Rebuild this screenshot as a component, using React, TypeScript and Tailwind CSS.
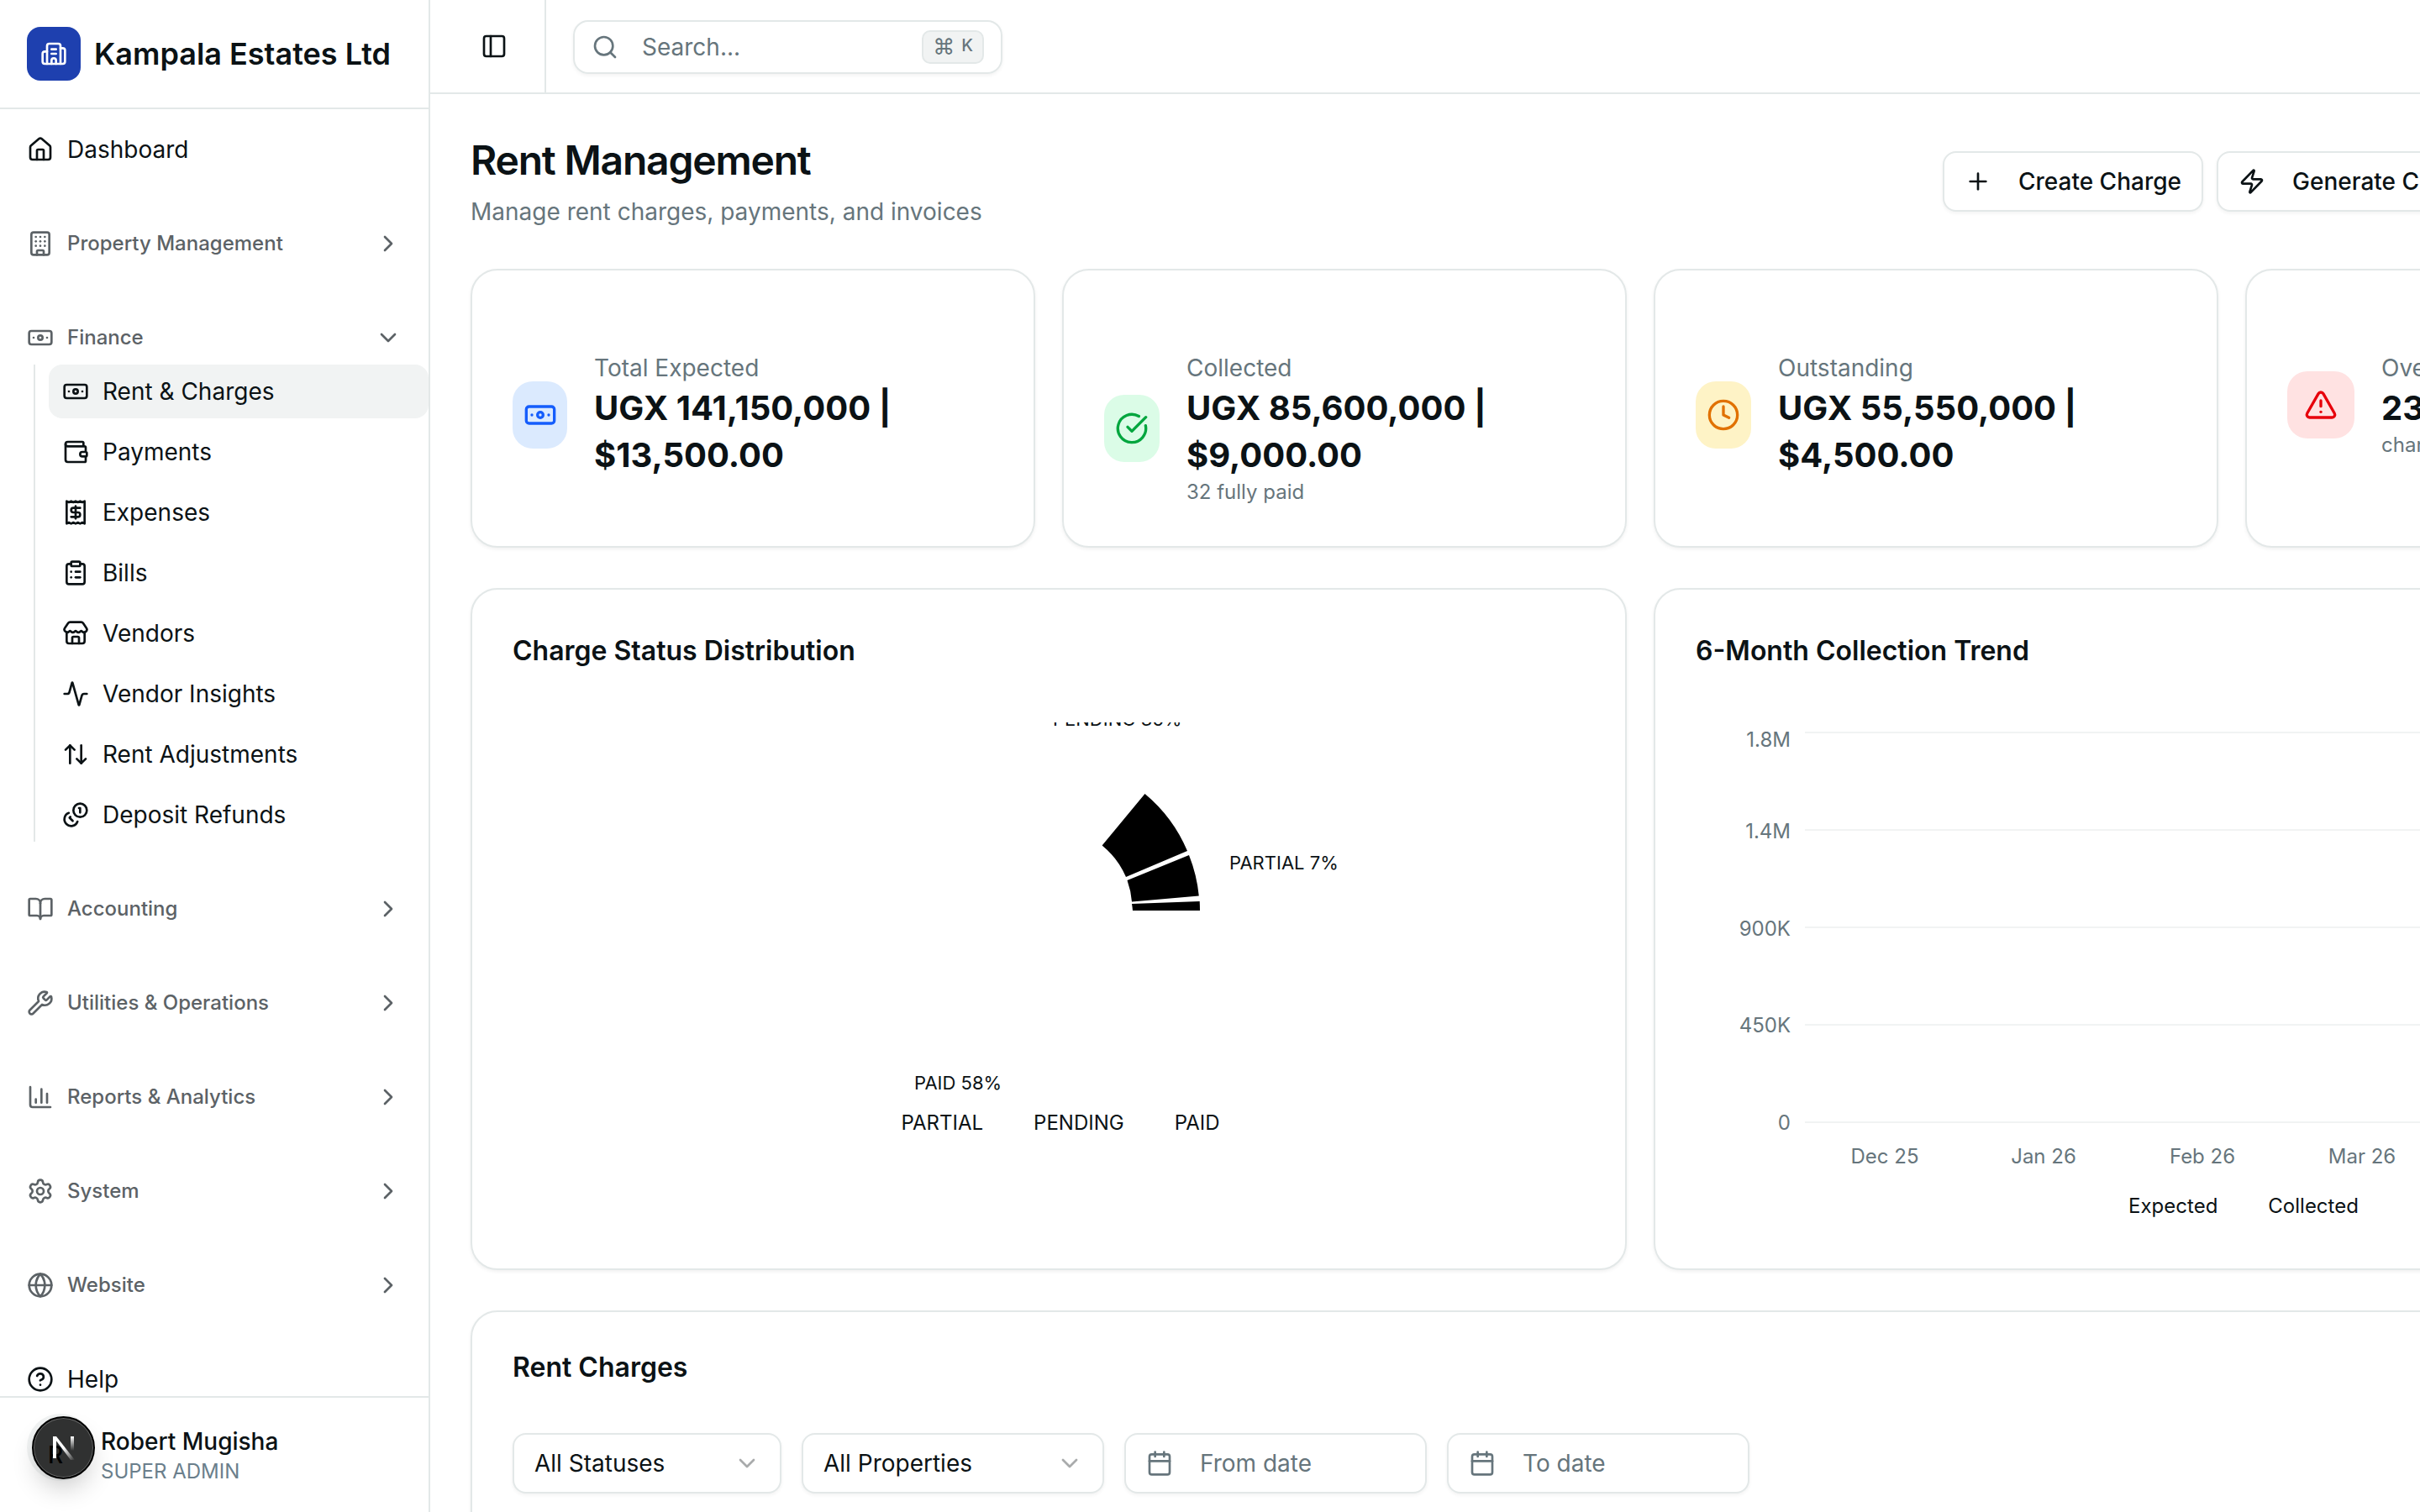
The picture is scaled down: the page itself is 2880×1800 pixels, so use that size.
import React from "react";
import {
  Activity,
  ArrowUpDown,
  Banknote,
  BookOpen,
  Building,
  Building2,
  Calendar,
  ChartColumn,
  ChevronDown,
  ChevronRight,
  CircleCheckBig,
  CircleHelp,
  ClipboardList,
  Clock,
  Globe,
  House,
  PanelLeft,
  Plus,
  Receipt,
  Search,
  Settings,
  Store,
  TriangleAlert,
  Wallet,
  Wrench,
  Zap,
} from "lucide-react";

// coins icon with the full coin on the top right, as in the picture
const RefundCoins = ({ size = 32, className = "" }: { size?: number; className?: string }) => (
  <svg
    width={size}
    height={size}
    viewBox="0 0 24 24"
    fill="none"
    stroke="currentColor"
    strokeWidth="2"
    strokeLinecap="round"
    strokeLinejoin="round"
    className={className}
  >
    <circle cx="16" cy="8" r="6" />
    <path d="M5.91 10.37A6 6 0 1 0 13.66 18" />
    <path d="M15 6h1v4" />
    <path d="m7.29 13.88-.7.71 2.82 2.82" />
  </svg>
);

const financeItems = [
  { label: "Rent & Charges", icon: Banknote, active: true },
  { label: "Payments", icon: Wallet },
  { label: "Expenses", icon: Receipt },
  { label: "Bills", icon: ClipboardList },
  { label: "Vendors", icon: Store },
  { label: "Vendor Insights", icon: Activity },
  { label: "Rent Adjustments", icon: ArrowUpDown },
  { label: "Deposit Refunds", icon: RefundCoins },
];

const stats = [
  {
    label: "Total Expected",
    value: "UGX 141,150,000 | $13,500.00",
    icon: Banknote,
    tile: "bg-blue-100 text-blue-600 w-[65px]",
  },
  {
    label: "Collected",
    value: "UGX 85,600,000 | $9,000.00",
    note: "32 fully paid",
    icon: CircleCheckBig,
    tile: "bg-green-100 text-green-600 w-[66px]",
  },
  {
    label: "Outstanding",
    value: "UGX 55,550,000 | $4,500.00",
    icon: Clock,
    tile: "bg-amber-100 text-amber-600 w-[66px]",
  },
  {
    label: "Overdue",
    value: "23",
    note: "charges",
    icon: TriangleAlert,
    tile: "bg-red-100 text-red-600 w-20",
  },
];

const NavGroup = ({ label, icon: Icon, open }: { label: string; icon: any; open?: boolean }) => (
  <div className="flex h-16 shrink-0 items-center gap-4 pl-8 pr-8 text-[24px] font-medium text-[#5c6266]">
    <Icon size={32} strokeWidth={2} className="shrink-0" />
    <span className="flex-1">{label}</span>
    {open ? <ChevronDown size={32} /> : <ChevronRight size={32} />}
  </div>
);

const NavLink = ({ label, icon: Icon }: { label: string; icon: any }) => (
  <div className="flex h-16 shrink-0 items-center gap-4 pl-8 text-[28px] text-[#0b1215]">
    <Icon size={32} className="shrink-0" />
    <span>{label}</span>
  </div>
);

const Sidebar = () => (
  <aside className="flex h-screen w-[512px] shrink-0 flex-col border-r-2 border-[#e3e8e8] bg-white">
    <div className="flex h-[130px] shrink-0 items-center gap-4 border-b-2 border-[#e3e8e8] pl-8">
      <div className="flex size-16 items-center justify-center rounded-2xl bg-[#1e40af] text-white">
        <Building2 size={32} />
      </div>
      <span className="text-[36px] font-semibold text-[#0b1215]">Kampala Estates Ltd</span>
    </div>

    <nav className="flex flex-1 flex-col gap-12 overflow-hidden pt-4">
      <NavLink label="Dashboard" icon={House} />
      <NavGroup label="Property Management" icon={Building} />
      <div className="flex shrink-0 flex-col">
        <NavGroup label="Finance" icon={Banknote} open />
        <div className="ml-10 flex flex-col gap-2 border-l-2 border-[#e3e8e8] pl-4">
          {financeItems.map((item) => (
            <div
              key={item.label}
              className={`flex h-16 items-center gap-4 rounded-2xl pl-4 text-[28px] text-[#0b1215] ${
                item.active ? "bg-[#f1f3f3]" : ""
              }`}
            >
              <item.icon size={32} className="shrink-0" />
              <span>{item.label}</span>
            </div>
          ))}
        </div>
      </div>
      <NavGroup label="Accounting" icon={BookOpen} />
      <NavGroup label="Utilities & Operations" icon={Wrench} />
      <NavGroup label="Reports & Analytics" icon={ChartColumn} />
      <NavGroup label="System" icon={Settings} />
      <NavGroup label="Website" icon={Globe} />
      <NavLink label="Help" icon={CircleHelp} />
    </nav>

    <div className="relative flex h-[138px] shrink-0 items-start gap-2 border-t-2 border-[#e3e8e8] bg-white pl-8 pt-[19px]">
      <div className="flex size-20 shrink-0 items-center justify-center rounded-full bg-[#f1f3f3] pr-3 pt-[18px] text-[28px] font-medium text-black">
        R
      </div>
      <div className="mt-[13px] flex flex-col">
        <span className="text-[28px] leading-10 font-medium text-[#0b1215]">Robert Mugisha</span>
        <span className="text-[24px] leading-8 text-[#6b7f8c]">SUPER ADMIN</span>
      </div>
      {/* dev indicator sitting over the avatar */}
      <div className="absolute left-[38px] top-[22px] flex size-[75px] items-center justify-center rounded-full border-2 border-black bg-black/80 shadow-[0_16px_32px_-8px_rgba(0,0,0,0.24),inset_0_0_0_1px_rgba(255,255,255,0.25)]">
        <svg width="26" height="28" viewBox="0 0 26 28">
          <defs>
            <linearGradient id="nDiag" x1="0" y1="0" x2="1" y2="1">
              <stop offset="0.5" stopColor="#fff" />
              <stop offset="1" stopColor="#fff" stopOpacity="0" />
            </linearGradient>
            <linearGradient id="nBar" x1="0" y1="0" x2="0" y2="1">
              <stop offset="0" stopColor="#fff" />
              <stop offset="1" stopColor="#fff" stopOpacity="0" />
            </linearGradient>
          </defs>
          <rect x="0" y="0" width="4" height="26" fill="#fff" />
          <polygon points="0,0 4,0 26,28 21,28" fill="url(#nDiag)" />
          <rect x="21" y="0" width="4" height="17" fill="url(#nBar)" />
        </svg>
      </div>
    </div>
  </aside>
);

const Topbar = () => (
  <header className="flex h-[112px] shrink-0 items-stretch border-b-2 border-[#e3e8e8] bg-white">
    <div className="flex w-[138px] items-center justify-center border-r-2 border-[#e3e8e8] pl-[16px] text-[#0b1215]">
      <PanelLeft size={32} />
    </div>
    <div className="flex items-center pl-8 pt-[2px]">
      <div className="flex h-16 w-[511px] items-center rounded-[18px] border-2 border-[#e3e8e8] pl-5 pr-[20px] shadow-[0_2px_4px_rgba(0,0,0,0.05)]">
        <Search size={32} className="shrink-0 text-[#66757c]" />
        <span className="ml-7 flex-1 text-[28px] text-[#66757c]">Search...</span>
        <span className="flex h-10 w-[74px] items-center justify-center gap-2 rounded-[10px] border-2 border-[#e3e8e8] bg-[#f1f3f3] text-[20px] font-medium text-[#66757c]">
          <span className="text-[26px] leading-none font-[DejaVu_Sans,sans-serif]">⌘</span>
          <span className="-mt-1">K</span>
        </span>
      </div>
    </div>
  </header>
);

const PageHeading = () => (
  <div className="flex items-center">
    <div className="w-[1752px] shrink-0">
      <h1 className="text-[48px] leading-[62px] font-semibold tracking-tight text-[#0b1215]">Rent Management</h1>
      <p className="mt-[10px] text-[28px] leading-10 text-[#66757c]">Manage rent charges, payments, and invoices</p>
    </div>
    <div className="flex gap-4">
      <button className="flex h-[72px] items-center gap-8 rounded-2xl border-2 border-[#e3e8e8] bg-white pl-6 pr-6 text-[28px] font-medium text-[#0b1215] shadow-[0_2px_4px_rgba(0,0,0,0.05)]">
        <Plus size={32} />
        Create Charge
      </button>
      <button className="flex h-[72px] items-center gap-8 rounded-2xl border-2 border-[#e3e8e8] bg-white pl-6 pr-6 text-[28px] font-medium text-[#0b1215] shadow-[0_2px_4px_rgba(0,0,0,0.05)]">
        <Zap size={32} />
        Generate Charges
      </button>
    </div>
  </div>
);

const StatCard = ({ stat }: { stat: (typeof stats)[number] }) => (
  <div className="flex w-[672px] shrink-0 items-start rounded-[32px] border-2 border-[#e3e8e8] bg-white px-12 pb-12 pt-24 shadow-[0_2px_4px_rgba(0,0,0,0.06)]">
    <div className="flex items-center gap-8">
      <div className={`flex h-20 shrink-0 items-center justify-center rounded-3xl ${stat.tile}`}>
        <stat.icon size={40} className="shrink-0" />
      </div>
      <div className="flex flex-col">
        <span className="text-[28px] leading-10 text-[#66757c]">{stat.label}</span>
        <span className="text-[40px] leading-14 font-bold text-[#0b1215]">{stat.value}</span>
        {stat.note && <span className="text-[24px] leading-8 text-[#66757c]">{stat.note}</span>}
      </div>
    </div>
  </div>
);

const ChartLabel = ({ x, y, children }: { x: number; y: number; children: React.ReactNode }) => (
  <text x={x} y={y} dominantBaseline="central" className="fill-[#0b1215] text-[22px]">
    {children}
  </text>
);

const ChargeStatusCard = () => (
  <div className="flex h-[812px] flex-col rounded-[32px] border-2 border-[#e3e8e8] bg-white p-12 shadow-[0_2px_4px_rgba(0,0,0,0.06)]">
    <h2 className="text-[32px] leading-[50px] font-semibold text-[#0b1215]">Charge Status Distribution</h2>
    <svg width="1276" height="461" viewBox="0 0 1276 461" className="mt-[60px] shrink-0">
      <path d="M752.5 85A180 180 0 0 1 803 153L730 184A100 100 0 0 0 701.6 146.4Z" fill="#000" />
      <path d="M805 158A180 180 0 0 1 816.8 206.4L737 213.6A100 100 0 0 0 731.5 188Z" fill="#000" />
      <path d="M817.7 213A180 180 0 0 1 818 224L738 224A100 100 0 0 0 737 216Z" fill="#000" />
      <text x="643" y="4" className="fill-[#0b1215] text-[22px]">
        PENDING 35%
      </text>
      <ChartLabel x={853} y={167}>
        PARTIAL 7%
      </ChartLabel>
      <ChartLabel x={478} y={429}>
        PAID 58%
      </ChartLabel>
    </svg>
    <div className="flex justify-center gap-[60px] pl-7 text-[24px] leading-8 text-[#0b1215]">
      <span>PARTIAL</span>
      <span>PENDING</span>
      <span>PAID</span>
    </div>
  </div>
);

const gridLines = [12, 128, 244, 360, 476];
const yTicks = [
  { label: "1.8M", y: 20 },
  { label: "1.4M", y: 129 },
  { label: "900K", y: 245 },
  { label: "450K", y: 360 },
  { label: "0", y: 476 },
];
const xTicks = [
  { label: "Dec 25", x: 225 },
  { label: "Jan 26", x: 414 },
  { label: "Feb 26", x: 603 },
  { label: "Mar 26", x: 793 },
  { label: "Apr 26", x: 982 },
  { label: "May 26", x: 1171 },
];

const TrendCard = () => (
  <div className="flex h-[812px] flex-col rounded-[32px] border-2 border-[#e3e8e8] bg-white p-12 shadow-[0_2px_4px_rgba(0,0,0,0.06)]">
    <h2 className="text-[32px] leading-[50px] font-semibold text-[#0b1215]">6-Month Collection Trend</h2>
    <svg width="1276" height="560" viewBox="0 0 1276 560" className="mt-[60px] shrink-0">
      {gridLines.map((y) => (
        <line key={y} x1="130" x2="1276" y1={y} y2={y} stroke="#f1f3f3" strokeWidth="2" />
      ))}
      {yTicks.map((t) => (
        <text key={t.label} x="113" y={t.y} textAnchor="end" dominantBaseline="central" className="fill-[#66757c] text-[24px]">
          {t.label}
        </text>
      ))}
      {xTicks.map((t) => (
        <text key={t.label} x={t.x} y="516" textAnchor="middle" dominantBaseline="central" className="fill-[#66757c] text-[24px]">
          {t.label}
        </text>
      ))}
    </svg>
    <div className="flex justify-center gap-[60px] pl-7 text-[24px] leading-8 text-[#0b1215]">
      <span>Expected</span>
      <span>Collected</span>
    </div>
  </div>
);

const FilterSelect = ({ label, width }: { label: string; width: string }) => (
  <div className={`flex h-[72px] items-center justify-between rounded-2xl border-2 border-[#e3e8e8] bg-white pl-6 pr-[23px] text-[28px] text-[#0b1215] shadow-[0_2px_4px_rgba(0,0,0,0.05)] ${width}`}>
    <span>{label}</span>
    <ChevronDown size={32} className="text-[#0b1215] opacity-35" />
  </div>
);

const FilterDate = ({ label }: { label: string }) => (
  <div className="flex h-[72px] w-[360px] items-center gap-8 rounded-2xl border-2 border-[#e3e8e8] bg-white pl-6 text-[28px] text-[#66757c] shadow-[0_2px_4px_rgba(0,0,0,0.05)]">
    <Calendar size={32} />
    <span>{label}</span>
  </div>
);

const RentCharges = () => (
  <div className="h-[600px] rounded-[32px] border-2 border-[#e3e8e8] bg-white p-12 shadow-[0_2px_4px_rgba(0,0,0,0.06)]">
    <h2 className="text-[32px] leading-9 font-semibold text-[#0b1215]">Rent Charges</h2>
    <div className="mt-[60px] flex gap-6">
      <FilterSelect label="All Statuses" width="w-[320px]" />
      <FilterSelect label="All Properties" width="w-[360px]" />
      <FilterDate label="From date" />
      <FilterDate label="To date" />
    </div>
  </div>
);

const App: React.FC = () => {
  return (
    <div className="flex h-screen overflow-hidden bg-white font-[Inter,sans-serif] text-[#0b1215]">
      <Sidebar />
      <main className="flex min-w-0 flex-1 flex-col overflow-hidden">
        <Topbar />
        <div className="ml-12 flex w-[2784px] shrink-0 flex-col gap-12 pt-12">
          <PageHeading />
          <div className="flex gap-8">
            {stats.map((stat) => (
              <StatCard key={stat.label} stat={stat} />
            ))}
          </div>
          <div className="grid grid-cols-2 gap-8">
            <ChargeStatusCard />
            <TrendCard />
          </div>
          <RentCharges />
        </div>
      </main>
    </div>
  );
};

export default App;
